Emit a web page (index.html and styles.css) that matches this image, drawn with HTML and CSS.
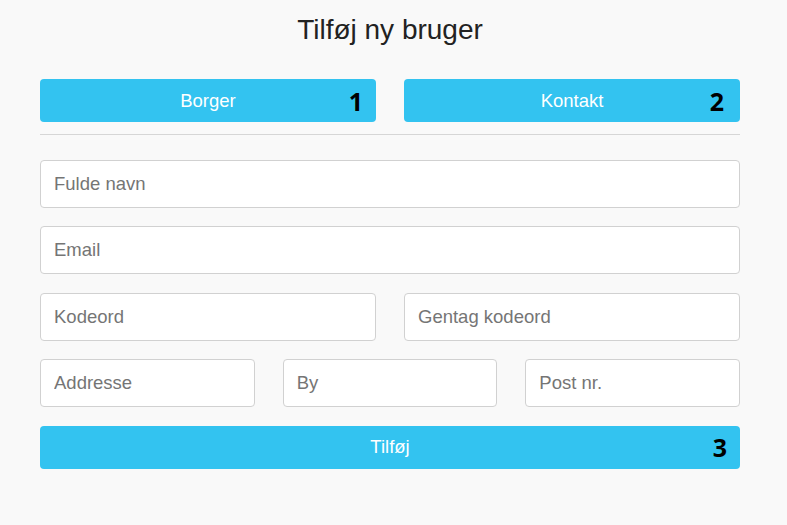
FILE: index.html
```html
<!DOCTYPE html>
<html lang="da">
<head>
<meta charset="utf-8">
<title>Tilføj ny bruger</title>
<link rel="stylesheet" href="styles.css">
</head>
<body>
<div class="page">
  <h1 class="title">Tilføj ny bruger</h1>
  <div class="row two tabs">
    <button class="btn">Borger<span class="num">1</span></button>
    <button class="btn">Kontakt<span class="num num-2">2</span></button>
  </div>
  <div class="divider"></div>
  <form class="form">
    <input class="field" type="text" placeholder="Fulde navn">
    <input class="field" type="email" placeholder="Email">
    <div class="row two">
      <input class="field" type="password" placeholder="Kodeord">
      <input class="field" type="password" placeholder="Gentag kodeord">
    </div>
    <div class="row three">
      <input class="field" type="text" placeholder="Addresse">
      <input class="field" type="text" placeholder="By">
      <input class="field" type="text" placeholder="Post nr.">
    </div>
    <button type="button" class="btn">Tilføj<span class="num">3</span></button>
  </form>
</div>
</body>
</html>
```
FILE: styles.css
```css
* { box-sizing: border-box; }
html, body {
  margin: 0;
  padding: 0;
  background: #f9f9f9;
  font-family: "Liberation Sans", Arial, sans-serif;
}
.page {
  width: 700px;
  margin-left: 40px;
  padding-top: 13px;
}
.title {
  margin: 0 0 32px;
  font-size: 28px;
  line-height: 34px;
  font-weight: normal;
  color: #222;
  text-align: center;
}
.row {
  display: grid;
}
.row.two {
  grid-template-columns: 1fr 1fr;
  column-gap: 28px;
}
.row.three {
  grid-template-columns: 1fr 1fr 1fr;
  column-gap: 28px;
}
.btn {
  position: relative;
  display: flex;
  align-items: center;
  justify-content: center;
  width: 100%;
  height: 43px;
  padding: 0;
  border: none;
  border-radius: 4px;
  background: #33c3f0;
  color: #fff;
  font-family: "Liberation Sans", Arial, sans-serif;
  font-size: 18.5px;
  cursor: pointer;
}
.num {
  position: absolute;
  right: 13px;
  top: 50%;
  transform: translateY(-50%);
  color: #000;
  font-family: "Open Sans", "DejaVu Sans", sans-serif;
  font-weight: bold;
  font-size: 25px;
  line-height: 1;
}
.num-2 { right: 16px; }
.divider {
  height: 1px;
  background: #d6d6d6;
  margin: 12px 0 25px;
}
.form {
  display: flex;
  flex-direction: column;
  gap: 18.4px;
  margin: 0;
}
.field {
  width: 100%;
  height: 48px;
  padding: 0 13px;
  border: 1px solid #d1d1d1;
  border-radius: 4px;
  background: #fff;
  font-family: "Liberation Sans", Arial, sans-serif;
  font-size: 18.5px;
  color: #333;
  outline: none;
}
.field::placeholder {
  color: #757575;
  opacity: 1;
}
```
